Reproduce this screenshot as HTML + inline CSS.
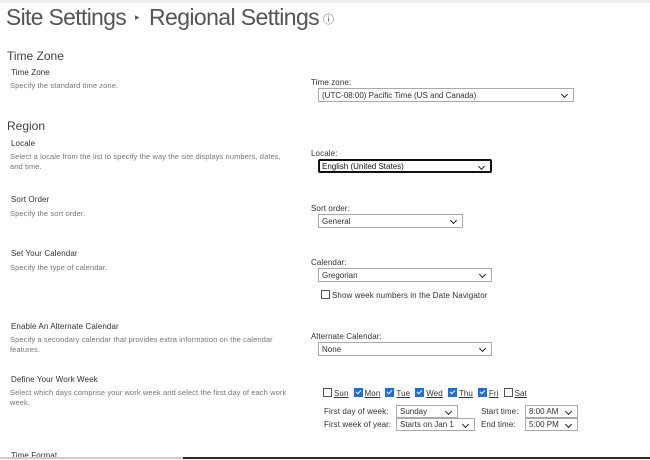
<!DOCTYPE html>
<html><head><style>
body{margin:0;width:650px;height:459px;overflow:hidden;background:#fff;font-family:"Liberation Sans",sans-serif;position:relative}
.a{position:absolute;white-space:nowrap}
.t{font-size:23px;color:#555;letter-spacing:-0.6px;transform-origin:0 0}
.h{font-size:12px;color:#444}
.l{font-size:8px;color:#333;letter-spacing:0.1px}
.d{font-size:7.5px;color:#777;line-height:10px;white-space:normal;letter-spacing:0.1px}
.sel{position:absolute;border:1px solid #aaa;background:#fff;font-size:8px;color:#333;box-sizing:border-box;padding:2px 3px;line-height:9px}
.sel:after{content:"";position:absolute;right:6px;top:3px;width:4px;height:4px;border-right:1.5px solid #222;border-bottom:1.5px solid #222;transform:rotate(45deg)}
.cb{display:inline-block;width:7px;height:7px;border:1px solid #555;vertical-align:-1px;margin-right:2px;background:#fff}
.ck{background:#1f6fd6;border-color:#1f6fd6;position:relative}
.ck:after{content:"";position:absolute;left:2px;top:0;width:2px;height:4px;border-right:1.5px solid #fff;border-bottom:1.5px solid #fff;transform:rotate(45deg)}
.u{text-decoration:underline;margin-right:5px}
</style></head><body>
<div class="a" style="left:0;top:0;width:650px;height:3px;background:#eee"></div>
<div class="a t" style="left:6px;top:4px;transform:scaleX(0.99)">Site Settings</div>
<div class="a" style="left:135px;top:12px;font-size:9px;color:#555">▸</div>
<div class="a t" style="left:149px;top:4px">Regional Settings</div>
<div class="a" style="left:323px;top:11px;font-size:11px;color:#555">ⓘ</div>

<div class="a h" style="left:7px;top:49px">Time Zone</div>
<div class="a l" style="left:11px;top:68px">Time Zone</div>
<div class="a d" style="left:10px;top:81px">Specify the standard time zone.</div>
<div class="a l" style="left:311px;top:78px">Time zone:</div>
<div class="sel" style="left:318px;top:88px;width:256px;height:14px">(UTC-08:00) Pacific Time (US and Canada)</div>

<div class="a h" style="left:7px;top:119px">Region</div>
<div class="a l" style="left:11px;top:139px">Locale</div>
<div class="a d" style="left:10px;top:152px;width:285px">Select a locale from the list to specify the way the site displays numbers, dates, and time.</div>
<div class="a l" style="left:311px;top:149px">Locale:</div>
<div class="sel" style="left:318px;top:159px;width:174px;height:14px;border:2px solid #111;border-radius:2px;padding:1px 2px;color:#111">English (United States)</div>

<div class="a l" style="left:11px;top:195px">Sort Order</div>
<div class="a d" style="left:10px;top:209px">Specify the sort order.</div>
<div class="a l" style="left:311px;top:204px">Sort order:</div>
<div class="sel" style="left:318px;top:214px;width:145px;height:14px">General</div>

<div class="a l" style="left:11px;top:249px">Set Your Calendar</div>
<div class="a d" style="left:10px;top:263px">Specify the type of calendar.</div>
<div class="a l" style="left:311px;top:258px">Calendar:</div>
<div class="sel" style="left:318px;top:268px;width:174px;height:14px">Gregorian</div>
<div class="a l" style="left:321px;top:290px"><span class="cb"></span>Show week numbers in the Date Navigator</div>

<div class="a l" style="left:11px;top:322px">Enable An Alternate Calendar</div>
<div class="a d" style="left:10px;top:335px;width:270px">Specify a secondary calendar that provides extra information on the calendar features.</div>
<div class="a l" style="left:311px;top:332px">Alternate Calendar:</div>
<div class="sel" style="left:318px;top:342px;width:174px;height:14px">None</div>

<div class="a l" style="left:11px;top:375px">Define Your Work Week</div>
<div class="a d" style="left:10px;top:388px;width:285px">Select which days comprise your work week and select the first day of each work week.</div>
<div class="a l" style="left:323px;top:388px"><span class="cb"></span><span class="u">Sun</span><span class="cb ck"></span><span class="u">Mon</span><span class="cb ck"></span><span class="u">Tue</span><span class="cb ck"></span><span class="u">Wed</span><span class="cb ck"></span><span class="u">Thu</span><span class="cb ck"></span><span class="u">Fri</span><span class="cb"></span><span class="u">Sat</span></div>
<div class="a l" style="left:324px;top:407px">First day of week:</div>
<div class="sel" style="left:396px;top:405px;width:62px;height:13px;padding-top:1px">Sunday</div>
<div class="a l" style="left:481px;top:407px">Start time:</div>
<div class="sel" style="left:525px;top:405px;width:53px;height:13px;padding-top:1px">8:00 AM</div>
<div class="a l" style="left:324px;top:420px">First week of year:</div>
<div class="sel" style="left:396px;top:418px;width:79px;height:13px;padding-top:1px">Starts on Jan 1</div>
<div class="a l" style="left:481px;top:420px">End time:</div>
<div class="sel" style="left:525px;top:418px;width:53px;height:13px;padding-top:1px">5:00 PM</div>

<div class="a l" style="left:11px;top:451px">Time Format</div>
<div class="a" style="left:0;top:457px;width:183px;height:2px;background:#ccc"></div>
<div class="a" style="left:183px;top:457px;width:467px;height:2px;background:#3b2220"></div>
</body></html>
